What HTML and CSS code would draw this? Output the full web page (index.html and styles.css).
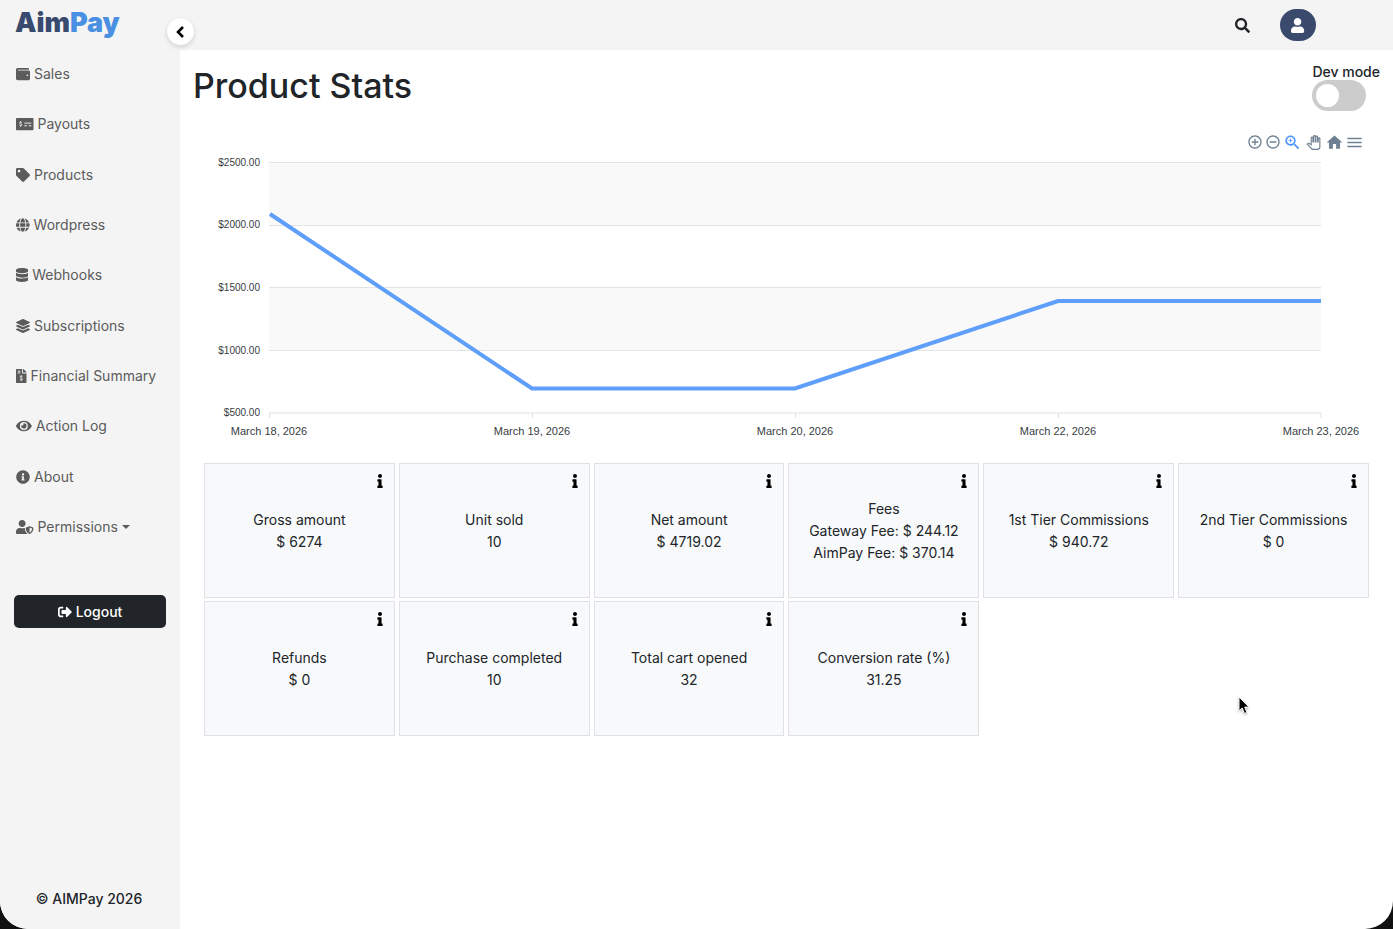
FILE: index.html
```html
<!DOCTYPE html>
<html lang="en">

<head>
    <meta charset="UTF-8">
    <meta name="viewport" content="width=device-width, initial-scale=1.0">
    <title>AimPay - Product Stats</title>
    <link rel="stylesheet" href="styles.css">
</head>

<body>
<svg class="symbols" aria-hidden="true">
    <symbol id="icon-info" viewBox="0 0 192 512">
        <path d="M20 424.229h20V279.771H20c-11.046 0-20-8.954-20-20V212c0-11.046 8.954-20 20-20h112c11.046 0 20 8.954 20 20v212.229h20c11.046 0 20 8.954 20 20V492c0 11.046-8.954 20-20 20H20c-11.046 0-20-8.954-20-20v-47.771c0-11.046 8.954-20 20-20zM96 0C56.235 0 24 32.235 24 72s32.235 72 72 72 72-32.235 72-72S135.764 0 96 0z"/>
    </symbol>
</svg>
<div class="app">
    <aside class="sidebar">
        <a class="logo" href="#">Aim<span>Pay</span></a>
        <button class="collapse" aria-label="Collapse menu">
            <svg viewBox="0 0 10 14"><path d="M7 2L2 7l5 5" fill="none" stroke="#000" stroke-width="2.6"/></svg>
        </button>
        <nav class="menu">
            <a href="#">
                <svg viewBox="0 0 512 512"><path d="M461.2 128H80c-8.84 0-16-7.16-16-16s7.16-16 16-16h384c8.84 0 16-7.16 16-16 0-26.51-21.49-48-48-48H64C28.65 32 0 60.65 0 96v320c0 35.35 28.65 64 64 64h397.2c28.02 0 50.8-21.53 50.8-48V176c0-26.47-22.78-48-50.8-48zM416 336c-17.67 0-32-14.33-32-32s14.33-32 32-32 32 14.33 32 32-14.33 32-32 32z"/></svg>
                Sales
            </a>
            <a href="#">
                <svg viewBox="0 0 640 512">
                    <rect y="32" width="640" height="448" rx="32"/>
                    <path class="cut" d="M304 224h256M304 320h96M464 320h96"/>
                    <path class="cut" d="M212 206c-20-18-80-18-80 14 0 40 80 22 80 66 0 34-60 34-84 12M170 150v40M170 312v44"/>
                </svg>
                Payouts
            </a>
            <a href="#">
                <svg viewBox="0 0 512 512"><path d="M0 252.118V48C0 21.49 21.49 0 48 0h204.118a48 48 0 0 1 33.941 14.059l211.882 211.882c18.745 18.745 18.745 49.137 0 67.882L293.823 497.941c-18.745 18.745-49.137 18.745-67.882 0L14.059 286.059A48 48 0 0 1 0 252.118zM112 64c-26.51 0-48 21.49-48 48s21.49 48 48 48 48-21.49 48-48-21.49-48-48-48z"/></svg>
                Products
            </a>
            <a href="#">
                <svg viewBox="0 0 496 512"><path d="M336.5 160C322 70.7 287.8 8 248 8s-74 62.7-88.5 152h177zM152 256c0 22.2 1.2 43.5 3.3 64h185.3c2.1-20.5 3.3-41.8 3.3-64s-1.2-43.5-3.3-64H155.3c-2.1 20.5-3.3 41.8-3.3 64zm324.7-96c-28.6-67.9-86.5-120.4-158-141.6 24.4 33.8 41.2 84.7 50 141.6h108zM177.2 18.4C105.8 39.6 47.8 92.1 19.3 160h108c8.7-56.9 25.5-107.8 49.9-141.6zM487.4 192H372.7c2.1 21 3.3 42.5 3.3 64s-1.2 43-3.3 64h114.6c5.5-20.5 8.6-41.8 8.6-64s-3.1-43.5-8.5-64zM120 256c0-21.5 1.2-43 3.3-64H8.6C3.2 212.5 0 233.8 0 256s3.2 43.5 8.6 64h114.6c-2-21-3.2-42.5-3.2-64zm39.5 96c14.5 89.3 48.7 152 88.5 152s74-62.7 88.5-152h-177zm159.3 141.6c71.4-21.2 129.4-73.7 158-141.6h-108c-8.8 56.9-25.6 107.8-50 141.6zM19.3 352c28.6 67.9 86.5 120.4 158 141.6-24.4-33.8-41.2-84.7-50-141.6h-108z"/></svg>
                Wordpress
            </a>
            <a href="#">
                <svg viewBox="0 0 448 512"><path d="M448 73.143v45.714C448 159.143 347.667 192 224 192S0 159.143 0 118.857V73.143C0 32.857 100.333 0 224 0s224 32.857 224 73.143zM448 176v102.857C448 319.143 347.667 352 224 352S0 319.143 0 278.857V176c48.125 33.143 136.208 48.572 224 48.572S399.874 209.143 448 176zm0 160v102.857C448 479.143 347.667 512 224 512S0 479.143 0 438.857V336c48.125 33.143 136.208 48.572 224 48.572S399.874 369.143 448 336z"/></svg>
                Webhooks
            </a>
            <a href="#">
                <svg viewBox="0 0 512 512"><path d="M12.41 148.02l232.94 105.67c6.8 3.09 14.49 3.09 21.29 0l232.94-105.67c16.55-7.51 16.55-32.52 0-40.03L266.65 2.31a25.607 25.607 0 0 0-21.29 0L12.41 107.98c-16.55 7.51-16.55 32.53 0 40.04zm487.18 88.28l-58.09-26.33-161.64 73.27c-7.56 3.43-15.59 5.17-23.86 5.17s-16.29-1.74-23.86-5.17L70.51 209.97l-58.1 26.33c-16.55 7.5-16.55 32.5 0 40l232.94 105.59c6.8 3.08 14.49 3.08 21.29 0L499.59 276.3c16.55-7.5 16.55-32.5 0-40zm0 127.8l-57.87-26.23-161.86 73.37c-7.56 3.43-15.59 5.17-23.86 5.17s-16.29-1.74-23.86-5.17L70.29 337.87 12.41 364.1c-16.55 7.5-16.55 32.5 0 40l232.94 105.59c6.8 3.08 14.49 3.08 21.29 0L499.59 404.1c16.55-7.5 16.55-32.5 0-40z"/></svg>
                Subscriptions
            </a>
            <a href="#">
                <svg viewBox="0 0 384 512">
                    <path d="M377 105L279.1 7c-4.5-4.5-10.6-7-17-7H256v128h128v-6.1c0-6.3-2.5-12.4-7-16.9zM224 136V0H24C10.7 0 0 10.7 0 24v464c0 13.3 10.7 24 24 24h336c13.3 0 24-10.7 24-24V160H248c-13.2 0-24-10.8-24-24z"/>
                    <path class="cut" d="M64 80h96M64 144h96"/>
                    <path class="cut" d="M236 282c-22-20-88-18-88 16 0 42 90 24 90 70 0 36-66 36-92 12M192 222v42M192 394v46"/>
                </svg>
                Financial Summary
            </a>
            <a href="#">
                <svg viewBox="0 0 576 512"><path d="M572.52 241.4C518.29 135.59 410.93 64 288 64S57.68 135.64 3.48 241.41a32.35 32.35 0 0 0 0 29.19C57.71 376.41 165.07 448 288 448s230.32-71.64 284.52-177.41a32.35 32.35 0 0 0 0-29.19zM288 400a144 144 0 1 1 144-144 143.93 143.93 0 0 1-144 144zm0-240a95.31 95.31 0 0 0-25.31 3.79 47.85 47.85 0 0 1-66.9 66.9A95.78 95.78 0 1 0 288 160z"/></svg>
                Action Log
            </a>
            <a href="#">
                <svg viewBox="0 0 512 512"><path d="M256 8C119.043 8 8 119.083 8 256c0 136.997 111.043 248 248 248s248-111.003 248-248C504 119.083 392.957 8 256 8zm0 110c23.196 0 42 18.804 42 42s-18.804 42-42 42-42-18.804-42-42 18.804-42 42-42zm56 254c0 6.627-5.373 12-12 12h-88c-6.627 0-12-5.373-12-12v-24c0-6.627 5.373-12 12-12h12v-64h-12c-6.627 0-12-5.373-12-12v-24c0-6.627 5.373-12 12-12h64c6.627 0 12 5.373 12 12v100h12c6.627 0 12 5.373 12 12v24z"/></svg>
                About
            </a>
            <a class="dropdown" href="#">
                <svg viewBox="0 0 640 512"><path d="M622.3 271.1l-115.2-45c-4.1-1.6-12.6-3.7-22.2 0l-115.2 45c-10.7 4.2-17.7 14-17.7 24.9 0 111.6 68.7 188.8 132.9 213.9 9.6 3.7 18 1.6 22.2 0C558.4 489.9 640 420.5 640 296c0-10.9-7-20.7-17.7-24.9zM496 462.4V273.3l95.5 37.3c-5.6 87.1-60.9 135.4-95.5 151.8zM224 256c70.7 0 128-57.3 128-128S294.7 0 224 0 96 57.3 96 128s57.3 128 128 128zm96 40c0-2.5.8-4.8 1.1-7.2-2.5-.1-4.9-.8-7.5-.8h-16.7c-22.2 10.2-46.9 16-72.9 16s-50.6-5.8-72.9-16h-16.7C60.2 288 0 348.2 0 422.4V464c0 26.5 21.5 48 48 48h352c6.8 0 13.3-1.5 19.2-4-54-42.9-99.2-116.7-99.2-212z"/></svg>
                Permissions
            </a>
        </nav>
        <button class="logout">
            <svg viewBox="0 0 512 512"><path d="M497 273L329 441c-15 15-41 4.5-41-17v-96H152c-13.3 0-24-10.7-24-24v-96c0-13.3 10.7-24 24-24h136V88c0-21.4 25.9-32 41-17l168 168c9.3 9.4 9.3 24.6 0 34zM192 436v-40c0-6.6-5.4-12-12-12H96c-17.7 0-32-14.3-32-32V160c0-17.7 14.3-32 32-32h84c6.6 0 12-5.4 12-12V76c0-6.6-5.4-12-12-12H96c-53 0-96 43-96 96v192c0 53 43 96 96 96h84c6.6 0 12-5.4 12-12z"/></svg>
            Logout
        </button>
        <p class="copyright">© AIMPay 2026</p>
    </aside>

    <div class="page">
        <header class="topbar">
            <button class="search" aria-label="Search">
                <svg viewBox="0 0 512 512"><path d="M505 442.7L405.3 343c-4.5-4.5-10.6-7-17-7H372c27.6-35.3 44-79.7 44-128C416 93.1 322.9 0 208 0S0 93.1 0 208s93.1 208 208 208c48.3 0 92.7-16.4 128-44v16.3c0 6.4 2.5 12.5 7 17l99.7 99.7c9.4 9.4 24.6 9.4 33.9 0l28.3-28.3c9.4-9.4 9.4-24.6.1-34zM208 336c-70.7 0-128-57.2-128-128 0-70.7 57.2-128 128-128 70.7 0 128 57.2 128 128 0 70.7-57.2 128-128 128z"/></svg>
            </button>
            <button class="avatar" aria-label="Account">
                <svg viewBox="0 0 448 512"><path d="M224 256c70.7 0 128-57.3 128-128S294.7 0 224 0 96 57.3 96 128s57.3 128 128 128zm89.6 32h-16.7c-22.2 10.2-46.9 16-72.9 16s-50.6-5.8-72.9-16h-16.7C60.2 288 0 348.2 0 422.4V464c0 26.5 21.5 48 48 48h352c26.5 0 48-21.5 48-48v-41.6c0-74.2-60.2-134.4-134.4-134.4z"/></svg>
            </button>
        </header>

        <main class="content">
            <div class="heading">
                <h1>Product Stats</h1>
                <div class="dev-mode">
                    <label for="dev_mode">Dev mode</label>
                    <input type="checkbox" id="dev_mode" class="switch">
                </div>
            </div>

            <div class="stats">
                <div class="toolbar">
                    <button aria-label="Zoom in"><svg viewBox="0 0 24 24"><path d="M13 7h-2v4H7v2h4v4h2v-4h4v-2h-4V7zm-1-5C6.48 2 2 6.48 2 12s4.48 10 10 10 10-4.48 10-10S17.52 2 12 2zm0 18c-4.41 0-8-3.59-8-8s3.59-8 8-8 8 3.59 8 8-3.59 8-8 8z"/></svg></button>
                    <button aria-label="Zoom out"><svg viewBox="0 0 24 24"><path d="M7 11v2h10v-2H7zm5-9C6.48 2 2 6.48 2 12s4.48 10 10 10 10-4.48 10-10S17.52 2 12 2zm0 18c-4.41 0-8-3.59-8-8s3.59-8 8-8 8 3.59 8 8-3.59 8-8 8z"/></svg></button>
                    <button class="wide big active" aria-label="Selection zoom"><svg viewBox="0 0 24 24"><path d="M15.5 14h-.79l-.28-.27C15.41 12.59 16 11.11 16 9.5 16 5.91 13.09 3 9.5 3S3 5.91 3 9.5 5.91 16 9.5 16c1.61 0 3.09-.59 4.23-1.57l.27.28v.79l5 4.99L20.49 19l-4.99-5zm-6 0C7.01 14 5 11.99 5 9.5S7.01 5 9.5 5 14 7.01 14 9.5 11.99 14 9.5 14zM12 10h-2v2H9v-2H7V9h2V7h1v2h2v1z"/></svg></button>
                    <button class="wide pan" aria-label="Panning"><svg viewBox="-1 -1 26 26"><path d="M23 5.5V20c0 2.2-1.8 4-4 4h-7.3c-1.08 0-2.1-.43-2.85-1.19L1 14.83s1.26-1.23 1.3-1.25c.22-.19.49-.29.79-.29.22 0 .42.06.6.16.04.01 4.31 2.46 4.31 2.46V4c0-.83.67-1.5 1.5-1.5S11 3.17 11 4v7h1V1.5c0-.83.67-1.5 1.5-1.5S15 .67 15 1.5V11h1V2.5c0-.83.67-1.5 1.5-1.5s1.5.67 1.5 1.5V11h1V5.5c0-.83.67-1.5 1.5-1.5s1.5.67 1.5 1.5z"/></svg></button>
                    <button class="wide big" aria-label="Reset zoom"><svg viewBox="0 0 24 24"><path d="M10 20v-6h4v6h5v-8h3L12 3 2 12h3v8z"/></svg></button>
                    <button class="big" aria-label="Menu"><svg viewBox="0 0 24 24"><path d="M3 18h18v-2H3v2zm0-5h18v-2H3v2zm0-7v2h18V6H3z"/></svg></button>
                </div>

                <svg class="chart" viewBox="0 0 1165 308" role="img" aria-label="Sales per day">
                    <rect class="band" x="65" y="8" width="1052" height="63"/>
                    <rect class="band" x="65" y="134" width="1052" height="62"/>
                    <path class="grid" d="M65 8.5h1052M65 71.5h1052M65 133.5h1052M65 196.5h1052"/>
                    <path class="axis" d="M65 259h1052M65.500 259v5M328.500 259v5M591.500 259v5M854.500 259v5M1117 259v5"/>
                    <path class="line" d="M66 60L328 234.500H591L854 147H1117"/>
                    <g class="y-labels">
                        <text x="56" y="12">$2500.00</text>
                        <text x="56" y="74">$2000.00</text>
                        <text x="56" y="137">$1500.00</text>
                        <text x="56" y="200">$1000.00</text>
                        <text x="56" y="262">$500.00</text>
                    </g>
                    <g class="x-labels">
                        <text x="65" y="281">March 18, 2026</text>
                        <text x="328" y="281">March 19, 2026</text>
                        <text x="591" y="281">March 20, 2026</text>
                        <text x="854" y="281">March 22, 2026</text>
                        <text x="1117" y="281">March 23, 2026</text>
                    </g>
                </svg>

                <div class="cards">
                    <div class="card">
                        <button class="info" aria-label="Info"><svg><use href="#icon-info"/></svg></button>
                        <p>Gross amount</p>
                        <p>$ 6274</p>
                    </div>
                    <div class="card">
                        <button class="info" aria-label="Info"><svg><use href="#icon-info"/></svg></button>
                        <p>Unit sold</p>
                        <p>10</p>
                    </div>
                    <div class="card">
                        <button class="info" aria-label="Info"><svg><use href="#icon-info"/></svg></button>
                        <p>Net amount</p>
                        <p>$ 4719.02</p>
                    </div>
                    <div class="card">
                        <button class="info" aria-label="Info"><svg><use href="#icon-info"/></svg></button>
                        <p>Fees</p>
                        <p>Gateway Fee: $ 244.12</p>
                        <p>AimPay Fee: $ 370.14</p>
                    </div>
                    <div class="card">
                        <button class="info" aria-label="Info"><svg><use href="#icon-info"/></svg></button>
                        <p>1st Tier Commissions</p>
                        <p>$ 940.72</p>
                    </div>
                    <div class="card">
                        <button class="info" aria-label="Info"><svg><use href="#icon-info"/></svg></button>
                        <p>2nd Tier Commissions</p>
                        <p>$ 0</p>
                    </div>
                    <div class="card">
                        <button class="info" aria-label="Info"><svg><use href="#icon-info"/></svg></button>
                        <p>Refunds</p>
                        <p>$ 0</p>
                    </div>
                    <div class="card">
                        <button class="info" aria-label="Info"><svg><use href="#icon-info"/></svg></button>
                        <p>Purchase completed</p>
                        <p>10</p>
                    </div>
                    <div class="card">
                        <button class="info" aria-label="Info"><svg><use href="#icon-info"/></svg></button>
                        <p>Total cart opened</p>
                        <p>32</p>
                    </div>
                    <div class="card">
                        <button class="info" aria-label="Info"><svg><use href="#icon-info"/></svg></button>
                        <p>Conversion rate (%)</p>
                        <p>31.25</p>
                    </div>
                </div>
            </div>
        </main>
    </div>

    <svg class="cursor" viewBox="0 0 12 19" aria-hidden="true">
        <path d="M1 1v14l3.200-3 2.300 5.500 2.500-1-2.300-5.400H11z" fill="#000" stroke="#fff"/>
    </svg>
</div>
</body>

</html>
```
FILE: styles.css
```css
* {
    padding: 0;
    margin: 0;
    box-sizing: border-box;
}

body {
    background-color: #111;
    color: #212529;
    font-family: Inter, "Liberation Sans", sans-serif;
    font-size: 14px;
    line-height: 22px;
}

button {
    border: none;
    background-color: transparent;
    font: inherit;
    cursor: pointer;
}

a {
    color: inherit;
    text-decoration: none;
}

svg {
    display: block;
}

.symbols {
    display: none;
}

.app {
    position: relative;
    display: flex;
    min-height: 100vh;
    background-color: #fff;
    border-radius: 0 0 28px 28px;
    overflow: hidden;
}

/* sidebar */

.sidebar {
    position: relative;
    display: flex;
    flex-direction: column;
    flex: none;
    width: 180px;
    background-color: #f4f4f4;
}

.logo {
    height: 49px;
    padding: 0 15px;
    color: #384a6e;
    font-size: 27px;
    font-weight: 900;
    line-height: 46px;
}

.logo span {
    color: #4a90e2;
}

.collapse {
    position: absolute;
    top: 18px;
    right: -14px;
    z-index: 1;
    display: grid;
    place-items: center;
    width: 27px;
    height: 27px;
    border-radius: 50%;
    background-color: #fff;
    box-shadow: 0 2px 5px rgba(0, 0, 0, 0.15);
}

.collapse svg {
    width: 10px;
    height: 14px;
}

.menu {
    display: grid;
    grid-auto-rows: 1fr;
    height: 503px;
    color: #5b5b5b;
}

.menu a {
    display: flex;
    align-items: center;
    gap: 4px;
    padding: 0 16px;
    white-space: nowrap;
}

.menu svg, .logout svg {
    height: 14px;
    fill: currentColor;
}

.menu .cut {
    fill: none;
    stroke: #f4f4f4;
    stroke-width: 34px;
}

.dropdown::after {
    content: "";
    border-top: 4px solid;
    border-left: 4px solid transparent;
    border-right: 4px solid transparent;
}

.logout {
    display: flex;
    align-items: center;
    justify-content: center;
    gap: 4px;
    height: 33px;
    margin: 43px 14px 0;
    border-radius: 5px;
    background-color: #212529;
    color: #fff;
    font-weight: 500;
}

.copyright {
    margin: auto 0 19px;
    padding-right: 2px;
    font-weight: 500;
    text-align: center;
}

/* header */

.page {
    flex: 1;
    min-width: 0;
}

.topbar {
    display: flex;
    align-items: center;
    justify-content: flex-end;
    gap: 30px;
    height: 50px;
    padding-right: 77px;
    background-color: #f4f4f4;
}

.search svg {
    width: 15px;
    height: 15px;
    fill: #212529;
}

.avatar {
    display: grid;
    place-items: center;
    width: 36px;
    height: 32px;
    border-radius: 16px;
    background-color: #3a4a6d;
}

.avatar svg {
    height: 15px;
    fill: #fff;
}

/* content */

.content {
    padding: 11px 13px;
}

.heading {
    display: flex;
    justify-content: space-between;
    height: 69px;
}

h1 {
    font-size: 34px;
    font-weight: 500;
    line-height: 50px;
}

.dev-mode label {
    display: block;
    height: 19px;
    font-weight: 500;
}

.switch {
    appearance: none;
    display: block;
    width: 54px;
    height: 31px;
    padding: 4px;
    border-radius: 16px;
    background-color: #ccc;
    cursor: pointer;
}

.switch::before {
    content: "";
    display: block;
    width: 23px;
    height: 23px;
    border-radius: 50%;
    background-color: #fff;
}

.switch:checked {
    background-color: #4a90e2;
}

.switch:checked::before {
    margin-left: auto;
}

.stats {
    padding: 0 11px;
}

.toolbar {
    display: flex;
    align-items: center;
    justify-content: flex-end;
    height: 24px;
    padding-right: 6px;
}

.toolbar button {
    display: grid;
    place-items: center;
    width: 18px;
}

.toolbar .wide {
    width: 21px;
}

.toolbar svg {
    width: 16px;
    height: 16px;
    fill: #6e8192;
}

.toolbar .big svg {
    width: 19px;
    height: 19px;
}

.toolbar .active svg {
    fill: #4f94ff;
}

.toolbar .pan svg {
    width: 15px;
    height: 15px;
    fill: #fff;
    stroke: #6e8192;
    stroke-width: 2px;
}

/* chart */

.chart {
    width: 100%;
    font-family: "Liberation Sans", Arial, sans-serif;
}

.band {
    fill: #f9f9f9;
}

.grid {
    stroke: #e4e4e4;
}

.axis {
    stroke: #e0e0e0;
}

.line {
    fill: none;
    stroke: #5f9ffb;
    stroke-width: 4px;
}

.y-labels {
    fill: #373d3f;
    font-size: 10px;
    text-anchor: end;
}

.x-labels {
    fill: #373d3f;
    font-size: 11px;
    text-anchor: middle;
}

/* cards */

.cards {
    display: grid;
    grid-template-columns: repeat(6, 1fr);
    gap: 3px 4px;
    margin-top: 1px;
}

.card {
    position: relative;
    display: flex;
    flex-direction: column;
    justify-content: center;
    min-height: 135px;
    border: 1px solid #dee2e6;
    background-color: #f8f9fb;
    text-align: center;
}

.info {
    position: absolute;
    top: 10px;
    right: 11px;
}

.info svg {
    width: 6px;
    height: 14px;
}

.cursor {
    position: absolute;
    top: 696px;
    left: 1238px;
    width: 12px;
    height: 19px;
    filter: drop-shadow(0 1px 1px rgba(0, 0, 0, 0.3));
}
```
